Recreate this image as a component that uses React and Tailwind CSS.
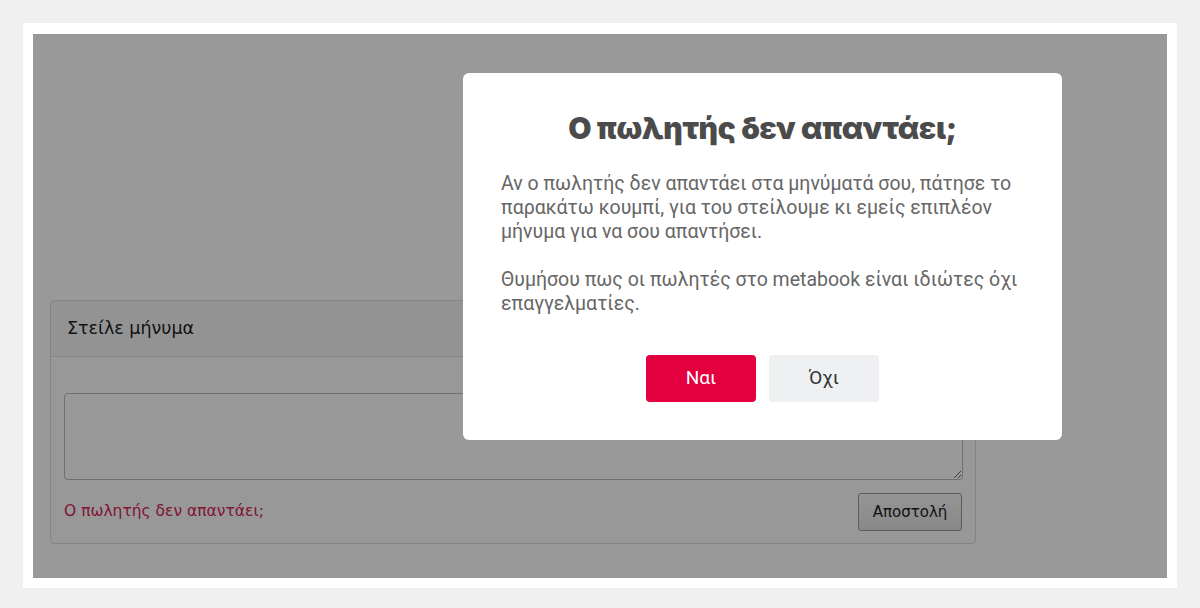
import React from "react";

export default function App() {
  return (
    <div className="h-[608px] bg-[#f0f0f0] pt-[23px] px-[23px]">
      {/* ===== white frame ===== */}
      <div className="bg-white pt-[11px] pb-[10px] px-[10px]">
        {/* ===== page under the modal ===== */}
        <div className="relative h-[544px] bg-white overflow-hidden">
          <div className="pt-[266px] px-[17px]">
            <div
              className="w-[926px] h-[244px] rounded-[4px] border border-[#dddddd] bg-[#fdfdfd]"
              style={{ fontFamily: '"DejaVu Sans", Verdana, sans-serif' }}
            >
              <div className="h-[56px] bg-[#f5f5f5] border-b border-[#dddddd] rounded-t-[4px] flex items-center px-[16px]">
                <span className="text-[17.5px] text-[#1e1e1e]">Στείλε μήνυμα</span>
              </div>
              <div className="px-[13px] pt-[36px]">
                <textarea className="block w-[899px] h-[87px] rounded-[4px] border border-[#bbbbbb] bg-white resize-y" />
                <div className="flex items-center justify-between mt-[13px]">
                  <span className="text-[15.5px] text-[#d62658]">Ο πωλητής δεν απαντάει;</span>
                  <button className="w-[104px] h-[38px] rounded-[3px] border border-[#9a9a9a] bg-gradient-to-b from-[#f8f8f8] to-[#e4e4e4] text-[15px] text-[#222]">
                    Αποστολή
                  </button>
                </div>
              </div>
            </div>
          </div>

          {/* ===== overlay ===== */}
          <div className="absolute inset-0 bg-black/40" />

          {/* ===== modal ===== */}
          <div className="absolute left-[430px] top-[39px] w-[599px] h-[367px] bg-white rounded-[6px] px-[38px] pt-[37px]">
            <h2
              className="text-center text-[30px] leading-[36px] font-black tracking-[-0.3px] text-[#4b4b4b]"
              style={{ fontFamily: 'Inter, "Liberation Sans", sans-serif' }}
            >
              Ο πωλητής δεν απαντάει;
            </h2>
            <div
              className="mt-[26px] text-[19.5px] leading-[24px] text-[#666666]"
              style={{ fontFamily: 'Roboto, "Liberation Sans", sans-serif' }}
            >
              <p>
                Αν ο πωλητής δεν απαντάει στα μηνύματά σου, πάτησε το παρακάτω
                κουμπί, για του στείλουμε κι εμείς επιπλέον μήνυμα για να σου
                απαντήσει.
              </p>
              <p className="mt-[24px]">
                Θυμήσου πως οι πωλητές στο metabook είναι ιδιώτες όχι
                επαγγελματίες.
              </p>
            </div>
            <div
              className="flex justify-center gap-[13px] mt-[39px]"
              style={{ fontFamily: 'Roboto, "Liberation Sans", sans-serif' }}
            >
              <button className="w-[110px] h-[47px] rounded-[4px] bg-[#e4003f] text-white text-[19px]">
                Ναι
              </button>
              <button className="w-[110px] h-[47px] rounded-[4px] bg-[#eef0f2] text-[#333] text-[19px]">
                Όχι
              </button>
            </div>
          </div>
        </div>
      </div>
    </div>
  );
}
